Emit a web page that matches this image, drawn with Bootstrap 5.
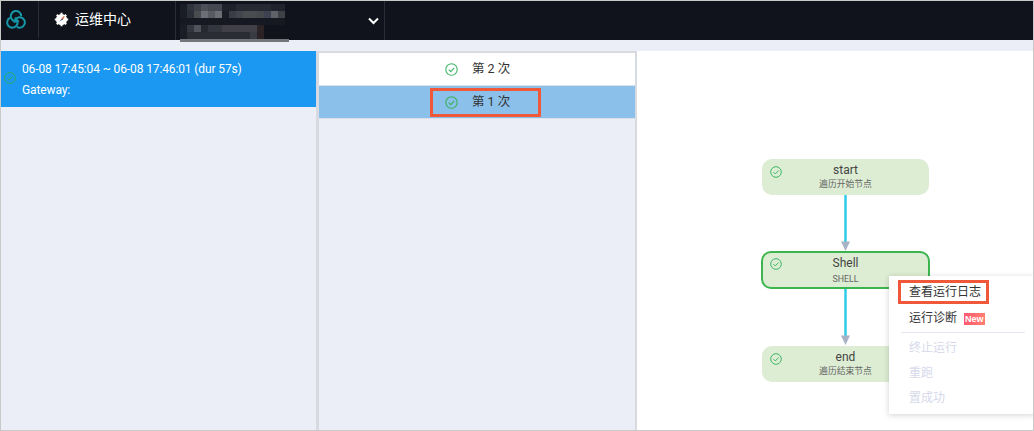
<!doctype html>
<html lang="zh">
<head>
<meta charset="utf-8">
<title>运维中心</title>
<link rel="stylesheet" href="https://cdn.jsdelivr.net/npm/bootstrap@5.3.0/dist/css/bootstrap.min.css">
<style>
html,body{height:100%;margin:0;overflow:hidden}
body{font-family:Roboto,"Liberation Sans","Noto Sans CJK SC",sans-serif;font-size:12px;color:#333}
.shell-frame{width:1034px;height:431px;border:1px solid #c9c9c9;background:#ebeef7;display:flex;flex-direction:column;overflow:hidden}
.topbar{height:39px;background:#10131b;color:#fff;flex:none}
.logo-cell{width:38px;height:37px;border-right:1px solid #2a2d38;padding-left:5px}
.app-cell{width:136px;height:37px;padding-left:15px;font-size:14px;gap:6px}
.proj-cell{width:210px;height:39px;border-left:1px solid #2a2d38;border-right:1px solid #2a2d38;position:relative;padding-right:1px}
.mosaic-wrap{position:absolute;left:4px;top:0}
.gap-band{height:11px;flex:none;background:#ebeef7}
.work-row{flex:1;min-height:0}
.runs-pane{width:315px;flex:none}
.run-active{height:56px;background:#1a98f2;color:#fff;padding:7.5px 0 0 21px;line-height:21px;position:relative;font-size:12px;letter-spacing:-.12px}
.run-active .status-ico{position:absolute;left:3px;top:21px}
.tries-pane{width:321px;flex:none;border:solid #d8dae2;border-width:2px 2px 0 3px}
.try-row{height:33px;font-size:12.5px;color:#333;border-bottom:1px solid #dde0ea}
.try-row.is-white{background:#fff}
.try-row.is-sel{background:#8bc0eb}
.try-inner{gap:14px;height:29px;width:111px;padding-left:15px;margin-left:111px}
.try-inner.flagged{border:3px solid #f0583a;padding-left:12px}
.canvas-pane{flex:1;background:#fff;position:relative}
.flow-node{position:absolute;left:125px;width:167px;height:36px;background:#dcedd3;border-radius:10px;text-align:center;color:#444;padding-top:3px}
.flow-node .ttl{font-size:12px;line-height:16px}
.flow-node .sub{font-size:8.8px;line-height:13px;color:#666}
.flow-node .status-ico{position:absolute;left:8px;top:7px}
.flow-node.current{border:2px solid #3cb54e;height:38px;left:124px;width:169px;padding-top:2px}
.flow-node.current .status-ico{left:7px;top:5px}
.flow-node.current .sub{margin-top:2px}
.wire{position:absolute;left:0;top:0}
.ctx-menu{position:absolute;left:252px;top:225px;width:146px;height:138px;background:#fff;box-shadow:0 1px 6px rgba(0,0,0,.18);padding:4px 0 0 0;font-size:12px}
.ctx-item{height:25px;padding-left:20px;color:#333;line-height:25px}
.ctx-item.off{color:#d6d9ea}
.ctx-item.flagged{width:91px;margin-left:9px;height:24px;line-height:18px;border:3px solid #f0583a;padding-left:8px;margin-bottom:2px}
.ctx-rule{height:1px;background:#e4e4f2;margin:1px 10px 3px 12px}
.new-tag{display:inline-block;background:linear-gradient(90deg,#ff5a70,#ff7f70);color:#fff;font-size:9px;font-weight:700;line-height:12px;padding:0 1px;margin-left:7px;font-family:"Liberation Sans",sans-serif}
</style>
</head>
<body>
<div class="shell-frame">
  <div class="topbar d-flex align-items-start">
    <div class="logo-cell d-flex align-items-center">
      <svg width="20" height="20" viewBox="0 0 20 20" fill="none" stroke="#1597a8" stroke-width="2">
        <path d="M12.800 10.600A5.200 5.200 0 1 1 15.200 6.300"/>
        <path d="M12.800 10.600A5.200 5.200 0 1 1 15.200 6.300" transform="rotate(120 10 10.400)"/>
        <path d="M12.800 10.600A5.200 5.200 0 1 1 15.200 6.300" transform="rotate(240 10 10.400)"/>
      </svg>
    </div>
    <div class="app-cell d-flex align-items-center">
      <svg width="15" height="15" viewBox="0 0 15 15"><circle cx="7.500" cy="7.500" r="5.600" fill="#fff"/><g stroke="#fff" stroke-width="2"><path d="M7.500 .8v13.400M.8 7.500h13.400M2.800 2.800l9.400 9.400M12.200 2.800l-9.400 9.400"/></g><path d="M5 10l2.200-2.600L10 4.600 9 7.600l-2 1z" fill="#2b3a78"/><path d="M7.600 7.200L10.400 4.400" stroke="#e0662f" stroke-width="1.200"/></svg>
      <span>运维中心</span>
    </div>
    <div class="proj-cell d-flex align-items-center justify-content-end">
      <div class="mosaic-wrap">
        <svg width="112" height="41" viewBox="0 0 112 41" shape-rendering="crispEdges">
          <rect x="0" y="3" width="105" height="35" fill="#1a1d26"/>
          <rect x="7" y="3" width="7" height="7" fill="#2f343e"/><rect x="14" y="3" width="7" height="7" fill="#3d4049"/><rect x="21" y="3" width="7" height="7" fill="#4d5058"/><rect x="28" y="3" width="14" height="7" fill="#454850"/>
          <rect x="42" y="3" width="14" height="7" fill="#1e2129"/><rect x="56" y="3" width="35" height="7" fill="#262932"/><rect x="91" y="3" width="14" height="7" fill="#20232b"/>
          <rect x="7" y="10" width="7" height="7" fill="#2c2f39"/><rect x="14" y="10" width="7" height="7" fill="#4a4d50"/><rect x="21" y="10" width="7" height="7" fill="#6c6f78"/><rect x="28" y="10" width="7" height="7" fill="#585b62"/><rect x="35" y="10" width="7" height="7" fill="#6d6f75"/>
          <rect x="49" y="10" width="7" height="7" fill="#3a3d46"/><rect x="56" y="10" width="7" height="7" fill="#42444e"/><rect x="63" y="10" width="14" height="7" fill="#4a4c50"/><rect x="77" y="10" width="7" height="7" fill="#46484c"/><rect x="84" y="10" width="7" height="7" fill="#3e4152"/><rect x="91" y="10" width="7" height="7" fill="#5f6268"/><rect x="98" y="10" width="7" height="7" fill="#3f4147"/>
          <rect x="0" y="17" width="105" height="7" fill="#161922"/>
          <rect x="7" y="24" width="7" height="7" fill="#33363f"/><rect x="14" y="24" width="7" height="7" fill="#50535d"/><rect x="21" y="24" width="7" height="7" fill="#25282f"/><rect x="28" y="24" width="14" height="7" fill="#33363f"/><rect x="42" y="24" width="35" height="7" fill="#413f48"/><rect x="77" y="24" width="7" height="7" fill="#2c2326"/><rect x="84" y="24" width="21" height="7" fill="#10131b"/>
          <rect x="7" y="31" width="77" height="7" fill="#2a2c34"/><rect x="70" y="31" width="7" height="7" fill="#383a44"/><rect x="77" y="31" width="7" height="7" fill="#2a2224"/><rect x="84" y="31" width="21" height="7" fill="#10131b"/>
          <rect x="0" y="38" width="109" height="3" fill="#74767c"/>
        </svg>
      </div>
      <svg width="11" height="8" viewBox="0 0 11 8" fill="none" stroke="#fff" stroke-width="2" class="me-1"><path d="M1 1.500l4.500 4.500 4.500-4.500"/></svg>
    </div>
  </div>
  <div class="gap-band"></div>
  <div class="work-row d-flex">
    <div class="runs-pane">
      <div class="run-active">
        <svg class="status-ico" width="12" height="12" viewBox="0 0 12 12" fill="none" stroke="#2fae68" stroke-width="1"><circle cx="6" cy="6" r="5.400"/><path d="M3.400 6.200l1.900 1.800 3.300-3.600"/></svg>
        <div>06-08 17:45:04 ~ 06-08 17:46:01 (dur 57s)</div>
        <div>Gateway:</div>
      </div>
    </div>
    <div class="tries-pane">
      <div class="try-row is-white d-flex align-items-center">
        <div class="try-inner d-flex align-items-center">
          <svg width="13" height="13" viewBox="0 0 13 13" fill="none" stroke="#42b76a" stroke-width="1.100"><circle cx="6.500" cy="6.500" r="5.700"/><path d="M3.800 6.600l2 2 3.500-3.800"/></svg>
          <span>第 2 次</span>
        </div>
      </div>
      <div class="try-row is-sel d-flex align-items-center">
        <div class="try-inner flagged d-flex align-items-center">
          <svg width="13" height="13" viewBox="0 0 13 13" fill="none" stroke="#3bb25a" stroke-width="1.100"><circle cx="6.500" cy="6.500" r="5.700"/><path d="M3.800 6.600l2 2 3.500-3.800"/></svg>
          <span>第 1 次</span>
        </div>
      </div>
    </div>
    <div class="canvas-pane">
      <svg class="wire" width="396" height="379" viewBox="0 0 396 379" fill="none">
        <path d="M208.500 144V191" stroke="#2fcbe8" stroke-width="2.500"/>
        <path d="M208.500 238V285" stroke="#2fcbe8" stroke-width="2.500"/>
        <path d="M204 190.500h9l-4.500 9.500z" fill="#a8b3c5"/>
        <path d="M204 284.500h9l-4.500 9.500z" fill="#a8b3c5"/>
      </svg>
      <div class="flow-node" style="top:108px">
        <svg class="status-ico" width="12" height="12" viewBox="0 0 12 12" fill="none" stroke="#42b76a" stroke-width="1"><circle cx="6" cy="6" r="5.300"/><path d="M3.400 6.100l1.900 1.900 3.300-3.500"/></svg>
        <div class="ttl">start</div><div class="sub">遍历开始节点</div>
      </div>
      <div class="flow-node current" style="top:200px">
        <svg class="status-ico" width="12" height="12" viewBox="0 0 12 12" fill="none" stroke="#42b76a" stroke-width="1"><circle cx="6" cy="6" r="5.300"/><path d="M3.400 6.100l1.900 1.900 3.300-3.500"/></svg>
        <div class="ttl">Shell</div><div class="sub">SHELL</div>
      </div>
      <div class="flow-node" style="top:295px">
        <svg class="status-ico" width="12" height="12" viewBox="0 0 12 12" fill="none" stroke="#42b76a" stroke-width="1"><circle cx="6" cy="6" r="5.300"/><path d="M3.400 6.100l1.900 1.900 3.300-3.500"/></svg>
        <div class="ttl">end</div><div class="sub">遍历结束节点</div>
      </div>
      <div class="ctx-menu">
        <div class="ctx-item flagged">查看运行日志</div>
        <div class="ctx-item">运行诊断<span class="new-tag">New</span></div>
        <div class="ctx-rule"></div>
        <div class="ctx-item off">终止运行</div>
        <div class="ctx-item off">重跑</div>
        <div class="ctx-item off">置成功</div>
      </div>
    </div>
  </div>
</div>
</body>
</html>
